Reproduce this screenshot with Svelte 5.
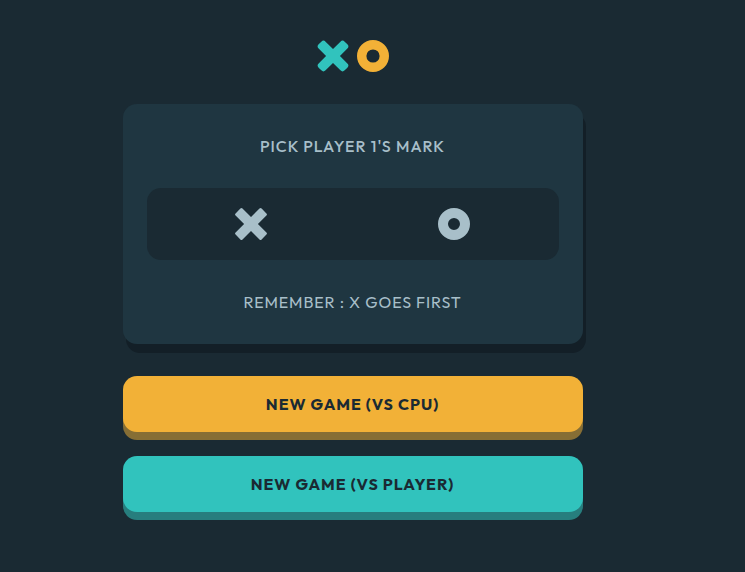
<script>
  const smallX = 'M8.562 1.634 16 9.073l7.438-7.439a3 3 0 0 1 4.243 0l2.685 2.685a3 3 0 0 1 0 4.243L22.927 16l7.439 7.438a3 3 0 0 1 0 4.243l-2.685 2.685a3 3 0 0 1-4.243 0L16 22.927l-7.438 7.439a3 3 0 0 1-4.243 0L1.634 27.68a3 3 0 0 1 0-4.243L9.073 16 1.634 8.562a3 3 0 0 1 0-4.243l2.685-2.685a3 3 0 0 1 4.243 0Z';
  const largeX = 'M15.002 1.147 32 18.145 48.998 1.147a3 3 0 0 1 4.243 0l9.612 9.612a3 3 0 0 1 0 4.243L45.855 32l16.998 16.998a3 3 0 0 1 0 4.243l-9.612 9.612a3 3 0 0 1-4.243 0L32 45.855 15.002 62.853a3 3 0 0 1-4.243 0L1.147 53.24a3 3 0 0 1 0-4.243L18.145 32 1.147 15.002a3 3 0 0 1 0-4.243l9.612-9.612a3 3 0 0 1 4.243 0Z';
</script>

<main>
  <div class="logo">
    <svg width="32" height="32" viewBox="0 0 32 32"><path d={smallX} fill="#31c3bd" /></svg>
    <svg width="32" height="32" viewBox="0 0 32 32"><circle cx="16" cy="16" r="11.3" fill="none" stroke="#f2b137" stroke-width="9.4" /></svg>
  </div>

  <section class="card">
    <h1>PICK PLAYER 1'S MARK</h1>
    <div class="marks">
      <button aria-label="X">
        <svg width="32" height="32" viewBox="0 0 64 64"><path d={largeX} fill="#a8bfc9" /></svg>
      </button>
      <button aria-label="O">
        <svg width="32" height="32" viewBox="0 0 32 32"><circle cx="16" cy="16" r="11" fill="none" stroke="#a8bfc9" stroke-width="10" /></svg>
      </button>
    </div>
    <p>REMEMBER : X GOES FIRST</p>
  </section>

  <button class="game cpu">NEW GAME (VS CPU)</button>
  <button class="game player">NEW GAME (VS PLAYER)</button>
</main>

<style>
  :global(body) {
    background: #1a2a33;
  }
  main {
    box-sizing: border-box;
    width: 460px;
    min-height: 572px;
    margin-left: 123px;
    padding-top: 40px;
    display: flex;
    flex-direction: column;
    font-family: Outfit, Lato, sans-serif;
    font-size: 16px;
    line-height: 20px;
  }
  svg {
    display: block;
  }
  button {
    border: 0;
    padding: 0;
    background: none;
    font-family: inherit;
  }
  .logo {
    display: flex;
    justify-content: center;
    gap: 8px;
    margin-bottom: 32px;
  }
  .card {
    box-sizing: border-box;
    height: 240px;
    padding: 32px 24px;
    border-radius: 14px;
    background: #1f3641;
    box-shadow: 3px 9px #131f27;
    display: flex;
    flex-direction: column;
    justify-content: space-between;
    text-align: center;
    color: #a8bfc9;
    margin-bottom: 32px;
  }
  h1,
  p {
    margin: 0;
    padding-right: 1px;
    font-size: 16px;
    line-height: 20px;
    white-space: nowrap;
  }
  h1 {
    font-weight: 500;
    letter-spacing: 1px;
  }
  p {
    font-weight: 400;
    letter-spacing: 0.87px;
  }
  .marks {
    height: 72px;
    padding: 0 9px 0 8px;
    box-sizing: border-box;
    border-radius: 14px;
    background: #1a2a33;
    display: flex;
    align-items: center;
    justify-content: space-between;
  }
  .marks button {
    width: 192px;
    display: flex;
    justify-content: center;
  }
  .game {
    height: 56px;
    padding-right: 1px;
    border-radius: 14px;
    color: #1a2a33;
    font-size: 16px;
    line-height: 20px;
    font-weight: 700;
    letter-spacing: 1px;
  }
  .cpu {
    background: #f2b137;
    box-shadow: 0 8px #866e35;
    margin-bottom: 24px;
  }
  .player {
    background: #31c3bd;
    box-shadow: 0 8px #277e7e;
  }
</style>
